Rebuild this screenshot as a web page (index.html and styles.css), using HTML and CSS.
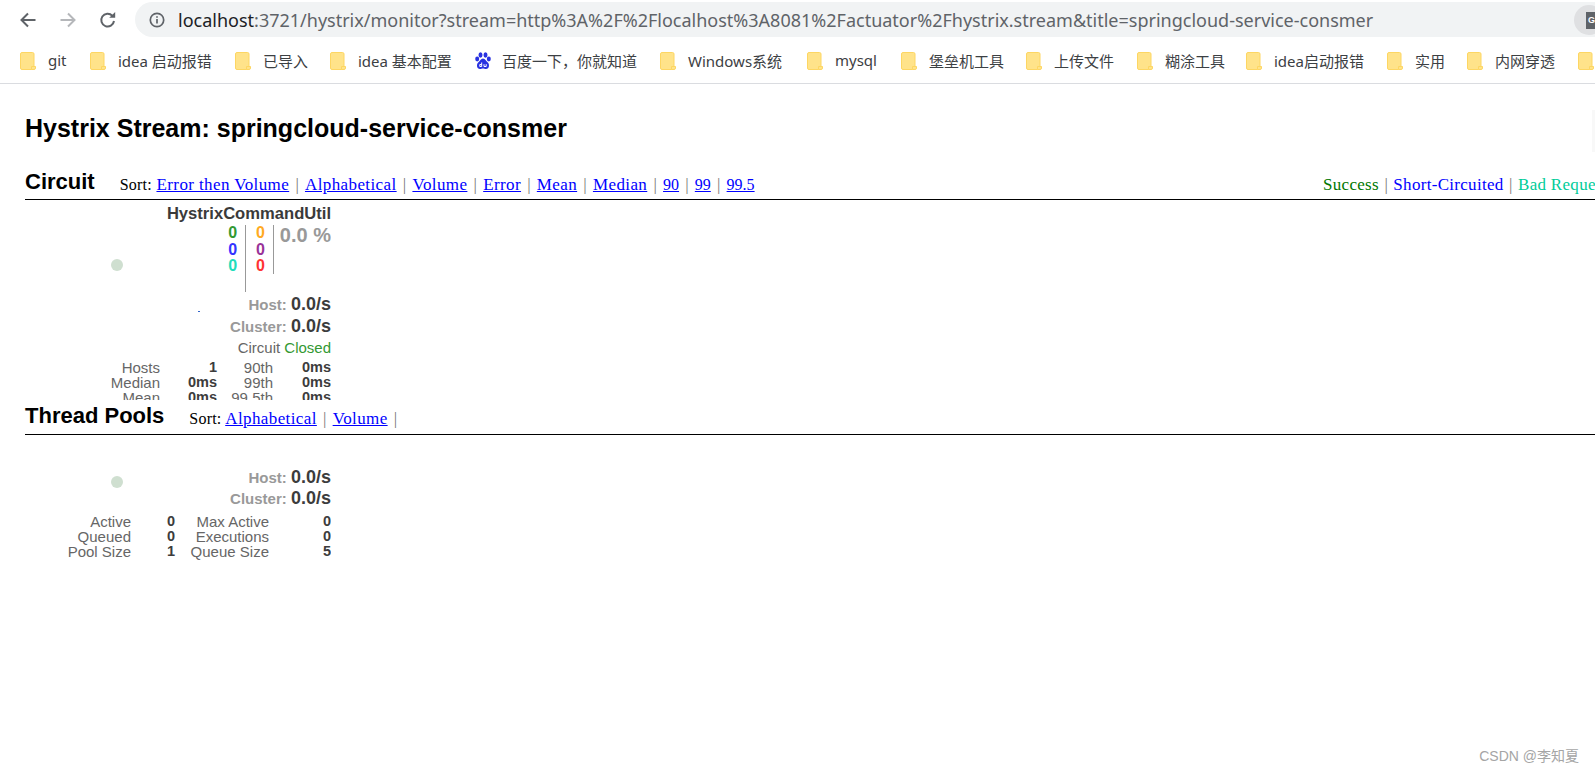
FILE: index.html
```html
<!DOCTYPE html>
<html lang="en">
<head>
<meta charset="utf-8">
<title>Hystrix Stream</title>
<link rel="stylesheet" href="styles.css">
</head>
<body>
<header class="chrome">
  <div class="navrow">
    <svg class="nav nav-back" viewBox="0 0 20 20"><path d="M17.5 10H3.5M10 3.5L3.5 10l6.5 6.5"/></svg>
    <svg class="nav nav-fwd" viewBox="0 0 20 20"><path d="M2.5 10h14M10 3.5l6.5 6.5-6.5 6.5"/></svg>
    <svg class="nav nav-reload" viewBox="0 0 20 20"><path d="M16 11a6.4 6.4 0 1 1-1.7-5.3"/><path class="solid" d="M11.2 7.8h6V2z"/></svg>
    <div class="omnibox">
      <svg class="info" viewBox="0 0 16 16"><circle cx="8" cy="8" r="6.7"/><path d="M8 7v4.4M8 4.2v1.6"/></svg>
      <span class="url"><span class="host">localhost</span>:3721/hystrix/monitor?stream=http%3A%2F%2Flocalhost%3A8081%2Factuator%2Fhystrix.stream&amp;title=springcloud-service-consmer</span>
      <div class="ext"><svg viewBox="0 0 20 20"><path d="M1 1h14v17H1z"/><text x="3" y="12" class="ext-g">G</text></svg></div>
    </div>
  </div>
  <nav class="bookmarks">
    <a class="bm b1"><svg class="folder" viewBox="0 0 16 18"><use href="#f"/></svg>git</a>
    <a class="bm b2"><svg class="folder" viewBox="0 0 16 18"><use href="#f"/></svg>idea 启动报错</a>
    <a class="bm b3"><svg class="folder" viewBox="0 0 16 18"><use href="#f"/></svg>已导入</a>
    <a class="bm b4"><svg class="folder" viewBox="0 0 16 18"><use href="#f"/></svg>idea 基本配置</a>
    <a class="bm b5"><svg class="baidu" viewBox="0 0 16 18"><ellipse cx="2.2" cy="7" rx="2" ry="2.4"/><ellipse cx="5.5" cy="3" rx="2" ry="2.7"/><ellipse cx="10.500" cy="3" rx="2" ry="2.7"/><ellipse cx="13.800" cy="7" rx="2" ry="2.4"/><path d="M8 6.500c2.200 0 3 2.500 4.800 4 2 1.700 1.600 6.500-1.800 6.500-1.200 0-2-.5-3-.5s-1.800.5-3 .5c-3.400 0-3.800-4.800-1.800-6.500C5 9 5.800 6.500 8 6.500z"/><path class="du" d="M6.700 10.500v4H4.800v-2h1.900M9 12.200v2.300h2.200v-2.300"/></svg>百度一下，你就知道</a>
    <a class="bm b6"><svg class="folder" viewBox="0 0 16 18"><use href="#f"/></svg>Windows系统</a>
    <a class="bm b7"><svg class="folder" viewBox="0 0 16 18"><use href="#f"/></svg>mysql</a>
    <a class="bm b8"><svg class="folder" viewBox="0 0 16 18"><use href="#f"/></svg>堡垒机工具</a>
    <a class="bm b9"><svg class="folder" viewBox="0 0 16 18"><use href="#f"/></svg>上传文件</a>
    <a class="bm b10"><svg class="folder" viewBox="0 0 16 18"><use href="#f"/></svg>糊涂工具</a>
    <a class="bm b11"><svg class="folder" viewBox="0 0 16 18"><use href="#f"/></svg>idea启动报错</a>
    <a class="bm b12"><svg class="folder" viewBox="0 0 16 18"><use href="#f"/></svg>实用</a>
    <a class="bm b13"><svg class="folder" viewBox="0 0 16 18"><use href="#f"/></svg>内网穿透</a>
    <a class="bm"><svg class="folder" viewBox="0 0 16 18"><use href="#f"/></svg></a>
  </nav>
  <svg class="defs" width="0" height="0"><defs><g id="f"><path class="f-body" d="M2 .5h10.500a1.500 1.500 0 0 1 1.500 1.500v12.500l-2.500 3H2A1.500 1.500 0 0 1 .5 16V2A1.500 1.500 0 0 1 2 .5z"/><path class="f-tab" d="M11.500 17.500v-3h4v1.500a1.500 1.500 0 0 1-1.500 1.500z"/></g></defs></svg>
</header>

<main class="page">
  <h1 class="title">Hystrix Stream: springcloud-service-consmer</h1>

  <section class="circuits">
    <div class="head">
      <h2>Circuit</h2>
      <div class="sort sort-c"><span class="lbl">Sort:</span> <a>Error then Volume</a><i>|</i><a>Alphabetical</a><i>|</i><a>Volume</a><i>|</i><a>Error</a><i>|</i><a>Mean</a><i>|</i><a>Median</a><i>|</i><a class="num">90</a><i>|</i><a class="num">99</a><i>|</i><a class="num">99.5</a></div>
      <div class="legend"><span class="l-ok">Success</span><i>|</i><span class="l-sc">Short-Circuited</span><i>|</i><span class="l-br">Bad Request</span></div>
    </div>
    <div class="monitor mon-c">
      <span class="bubble bubble-c"></span>
      <span class="speck"></span>
      <div class="name">HystrixCommandUtil</div>
      <div class="counters">
        <div class="col col-a"><b class="c-green">0</b><b class="c-blue">0</b><b class="c-teal">0</b></div>
        <div class="col col-b"><b class="c-orange">0</b><b class="c-purple">0</b><b class="c-red">0</b></div>
        <div class="rate">0.0 %</div>
      </div>
      <div class="stat"><span>Host:</span> <b>0.0/s</b></div>
      <div class="stat"><span>Cluster:</span> <b>0.0/s</b></div>
      <div class="state">Circuit <span>Closed</span></div>
      <div class="grid grid-c">
        <span>Hosts</span><b>1</b><span>90th</span><b>0ms</b>
        <span>Median</span><b>0ms</b><span>99th</span><b>0ms</b>
        <span>Mean</span><b>0ms</b><span>99.5th</span><b>0ms</b>
      </div>
    </div>
  </section>

  <section class="pools">
    <div class="head">
      <h2>Thread Pools</h2>
      <div class="sort sort-t"><span class="lbl">Sort:</span> <a>Alphabetical</a><i>|</i><a>Volume</a><i>|</i></div>
    </div>
    <div class="monitor mon-t">
      <span class="bubble bubble-t"></span>
      <div class="stat"><span>Host:</span> <b>0.0/s</b></div>
      <div class="stat"><span>Cluster:</span> <b>0.0/s</b></div>
      <div class="grid grid-t">
        <span>Active</span><b>0</b><span>Max Active</span><b>0</b>
        <span>Queued</span><b>0</b><span>Executions</span><b>0</b>
        <span>Pool Size</span><b>1</b><span>Queue Size</span><b>5</b>
      </div>
    </div>
  </section>
</main>
<span class="edge"></span>
<div class="mark">CSDN @李知夏</div>
</body>
</html>
```
FILE: styles.css
```css
* { box-sizing: border-box; }
html, body { margin: 0; height: 100%; overflow: hidden; background: #fff; }
body { font-family: "Liberation Sans", Arial, sans-serif; width: 1595px; height: 773px; position: relative; }

.chrome { height: 84px; border-bottom: 1px solid #dadce0; background: #fff; }
.navrow { display: flex; align-items: center; height: 40px; }
.nav { width: 20px; height: 20px; fill: none; stroke-width: 2; flex: none; }
.nav-back { margin-left: 18px; stroke: #5f6368; }
.nav-fwd { margin-left: 20px; stroke: #b5b7ba; }
.nav-reload { margin-left: 20px; stroke: #5f6368; }
.nav-reload .solid { fill: #5f6368; stroke: none; }
.omnibox { position: relative; margin-left: 17px; width: 1460px; flex: none; height: 35px; margin-top: -1px; background: #f1f3f4; border-radius: 18px 0 0 18px; display: flex; align-items: center; padding-left: 14px; }
.info { width: 16px; height: 16px; fill: none; stroke: #5f6368; stroke-width: 1.700; flex: none; }
.url { margin-left: 13px; font: 18px "Noto Sans", sans-serif; color: #5f6368; white-space: nowrap; }
.host { color: #202124; }
.ext { position: absolute; left: 1439px; top: 3px; width: 30px; height: 30px; border-radius: 50%; background: #dfe0e2; padding: 6px 0 0 11px; }
.ext svg { width: 20px; height: 20px; fill: #5f6368; display: block; }
.ext-g { font: bold 9px "Liberation Sans", sans-serif; fill: #fff; }

.bookmarks { display: flex; align-items: center; height: 42px; padding-left: 20px; white-space: nowrap; overflow: hidden; }
.bm { display: flex; align-items: center; flex: none; padding-bottom: 2px; font: 15px "Noto Sans", "Noto Sans CJK SC", sans-serif; color: #3c4043; }
.folder { width: 16px; height: 18px; flex: none; margin: 1px 12px 0 0; }
.f-body { fill: #ffe38a; stroke: #fdd663; }
.f-tab { fill: #ffe38a; stroke: #fdd663; }
.baidu { width: 16px; height: 18px; flex: none; margin: 1px 11px 0 0; fill: #2932e1; }
.baidu .du { fill: none; stroke: #fff; stroke-width: 1; }
.defs { position: absolute; }
.b1 { width: 70px; } .b2 { width: 145px; } .b3 { width: 95px; } .b4 { width: 145px; }
.b5 { width: 185px; } .b6 { width: 147px; } .b7 { width: 94px; } .b8 { width: 125px; }
.b9 { width: 111px; } .b10 { width: 109px; } .b11 { width: 141px; } .b12 { width: 80px; } .b13 { width: 111px; }

.page { padding: 29px 0 0 25px; }
.title { margin: 0; font-size: 25px; line-height: 30px; font-weight: bold; color: #000; }

.head { display: flex; align-items: flex-end; border-bottom: 1px solid #000; white-space: nowrap; }
.head h2 { margin: 0; font-size: 22px; line-height: 26px; font-weight: bold; color: #000; flex: none; }
.circuits .head { margin-top: 23px; height: 34px; padding-bottom: 4px; }
.pools .head { height: 35px; padding-bottom: 5px; }
.sort { font: 17px/20px "Liberation Serif", "Times New Roman", serif; letter-spacing: .4px; color: #000; flex: none; }
.lbl { font-size: 16px; letter-spacing: .2px; }
.sort a { color: #00f; text-decoration: underline; }
.sort a.num { font-size: 16px; letter-spacing: 0; }
.sort i { font-style: normal; color: #777; margin: 0 6.200px; letter-spacing: 0; }
.legend i { font-style: normal; color: #777; margin: 0 5.500px; letter-spacing: 0; }
.sort-c { margin-left: 25px; }
.sort-t { margin-left: 25px; }
.legend { margin-left: auto; width: 272px; overflow: hidden; font: 17px/20px "Liberation Serif", "Times New Roman", serif; letter-spacing: .3px; flex: none; }
.l-ok { color: #070; }
.l-sc { color: #00f; }
.l-br { color: #0c9; }

.monitor { width: 306px; position: relative; color: #333; text-align: right; overflow: hidden; }
.mon-c { height: 200px; }
.mon-t { padding-top: 32px; height: 130px; }
.mon-t .stat { line-height: 21px; }
.bubble { position: absolute; width: 12px; height: 12px; border-radius: 50%; background: #cfdfd0; left: 86px; }
.bubble-c { top: 59px; }
.bubble-t { top: 41px; }
.speck { position: absolute; left: 173px; top: 111px; width: 2px; height: 1px; background: #36c; }

.name { font-size: 16.600px; line-height: 20px; font-weight: bold; color: #3a3a3a; margin-top: 4px; }
.counters { display: flex; justify-content: flex-end; height: 67px; margin: 1px 0 2px; }
.col { display: flex; flex-direction: column; font-size: 16px; line-height: 16.500px; padding-right: 8px; border-right: 1px solid #999; }
.col-a { height: 67px; }
.col-b { height: 49px; padding-left: 10px; }
.rate { width: 57px; font-size: 20px; line-height: 20px; font-weight: bold; color: #999; }
.c-green { color: #393; } .c-blue { color: #33f; } .c-teal { color: #2db; }
.c-orange { color: #fa2; } .c-purple { color: #939; } .c-red { color: #f33; }

.stat { font-size: 15px; line-height: 21.500px; color: #999; }
.stat span { font-weight: bold; }
.stat b { font-size: 18px; color: #3c3c3c; }
.state { font-size: 15px; line-height: 21px; color: #666; }
.state span { color: #393; }

.grid { display: grid; font-size: 15px; line-height: 15px; color: #666; }
.grid b { font-size: 14.500px; color: #3c3c3c; }
.grid-c { grid-template-columns: 135px 57px 56px 58px; margin-top: 2px; }
.grid-t { grid-template-columns: 106px 44px 94px 62px; margin-top: 5px; }

.edge { position: absolute; left: 1592px; top: 110px; width: 3px; height: 42px; background: #f8f8f8; }
.mark { position: absolute; right: 16px; bottom: 8px; font: 14px "Liberation Sans", "Noto Sans CJK SC", sans-serif; color: #a5a5a5; }
```
